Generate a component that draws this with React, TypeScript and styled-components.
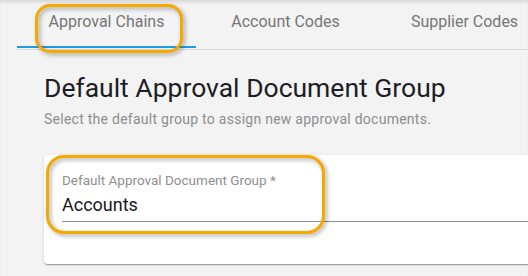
import styled, { createGlobalStyle } from "styled-components";

const GlobalStyle = createGlobalStyle`
  html, body {
    margin: 0;
    padding: 0;
    background: #f3f3f3;
  }
  body {
    font-family: Roboto, "Liberation Sans", sans-serif;
  }
`;

const tabs = ["Approval Chains", "Account Codes", "Supplier Codes"];

const Page = styled.div`
  position: relative;
  width: 528px;
  height: 276px;
  overflow: hidden;
  background: #f3f3f3;
  box-shadow: inset 0 4px 5px -3px rgba(0, 0, 0, 0.18);
`;

const TabBar = styled.div`
  display: flex;
  margin-left: 17px;
  padding-bottom: 1px;
  border-bottom: 1px solid #dcdcdc;
`;

const Tab = styled.div<{ $active?: boolean }>`
  position: relative;
  flex: 0 0 179px;
  box-sizing: border-box;
  height: 48px;
  padding-top: 12px;
  text-align: center;
  font-size: 16px;
  line-height: 20px;
  color: #767676;
  white-space: nowrap;
  border-bottom: 2px solid ${(p) => (p.$active ? "#1a9ce6" : "transparent")};
`;

/* orange call-out drawn over the screenshot */
const Highlight = styled.div<{ $radius: number }>`
  position: absolute;
  box-sizing: border-box;
  border: 3px solid #f6a800;
  border-radius: ${(p) => p.$radius}px;
  filter: drop-shadow(2px 2px 2px rgba(0, 0, 0, 0.35));
  pointer-events: none;
`;

const TabHighlight = styled(Highlight)`
  left: 35px;
  top: 4px;
  width: 148px;
  height: 49px;
`;

const Content = styled.div`
  padding: 22px 0 0 44px;
`;

const Heading = styled.h1`
  margin: 0;
  font-size: 26.5px;
  font-weight: 400;
  line-height: 32px;
  color: #1d1d25;
  white-space: nowrap;
`;

const Subtitle = styled.p`
  margin: 7px 0 0;
  font-size: 14px;
  line-height: 16px;
  letter-spacing: 0.26px;
  color: #8d8d8d;
  white-space: nowrap;
`;

const Card = styled.div`
  position: relative;
  box-sizing: border-box;
  width: 600px;
  height: 109px;
  margin-top: 28px;
  padding: 17px 0 0 18px;
  background: #fff;
  border-radius: 4px;
  box-shadow: 0 2px 1px -1px rgba(0, 0, 0, 0.2), 0 1px 1px 0 rgba(0, 0, 0, 0.14),
    0 1px 3px 0 rgba(0, 0, 0, 0.12);
`;

const FieldHighlight = styled(Highlight)`
  left: 2px;
  top: 0;
  width: 279px;
  height: 79px;
`;

const Field = styled.div`
  display: flex;
  flex-direction: column;
`;

const Label = styled.label`
  font-size: 13.5px;
  line-height: 16px;
  color: #8f8f8f;
  white-space: nowrap;
`;

const Value = styled.div`
  margin-top: 6px;
  padding-bottom: 6px;
  font-size: 18px;
  line-height: 21px;
  color: #16161e;
  border-bottom: 1px solid #8f8f8f;
`;

export default function App() {
  return (
    <>
      <GlobalStyle />
      <Page>
        <TabBar>
          {tabs.map((t, i) => (
            <Tab key={t} $active={i === 0}>
              {t}
            </Tab>
          ))}
        </TabBar>
        <TabHighlight $radius={15} />
        <Content>
          <Heading>Default Approval Document Group</Heading>
          <Subtitle>Select the default group to assign new approval documents.</Subtitle>
          <Card>
            <Field>
              <Label>Default Approval Document Group *</Label>
              <Value>Accounts</Value>
            </Field>
            <FieldHighlight $radius={18} />
          </Card>
        </Content>
      </Page>
    </>
  );
}
